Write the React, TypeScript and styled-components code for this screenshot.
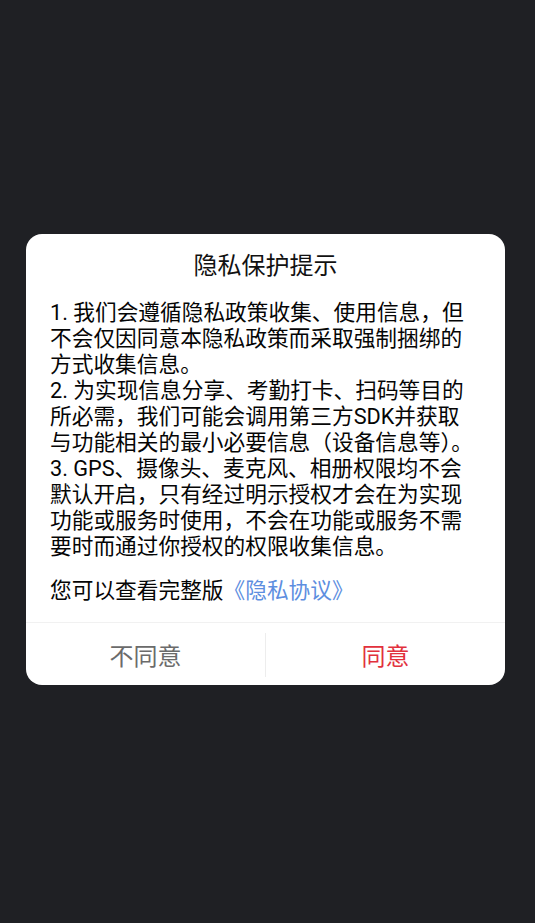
import { FC } from 'react'
import styled, { createGlobalStyle } from 'styled-components'

const GlobalStyle = createGlobalStyle`
  html, body {
    margin: 0;
    padding: 0;
    background: #1f2024;
  }
  * {
    box-sizing: border-box;
  }
`

const Page = styled.div`
  min-height: 100vh;
  display: flex;
  align-items: center;
  padding: 0 0 4px 26px;
  font-family: Roboto, 'Noto Sans CJK SC', sans-serif;
`

const Dialog = styled.div`
  width: 479px;
  background: #ffffff;
  border-radius: 16px;
  overflow: hidden;
  display: flex;
  flex-direction: column;
`

const Title = styled.h2`
  margin: 0;
  padding-top: 16px;
  font-size: 24px;
  line-height: 32px;
  font-weight: 400;
  color: #111;
  text-align: center;
`

const Body = styled.div`
  padding: 18px 27px 18px 24px;
  display: flex;
  flex-direction: column;
  gap: 18px;
`

const Terms = styled.div`
  font-size: 21.7px;
  line-height: 26px;
  color: #050505;
`

const Note = styled.p`
  margin: 0;
  font-size: 21.7px;
  line-height: 26px;
  color: #050505;
`

const Link = styled.a`
  color: #5d8ee0;
  text-decoration: none;
`

const Footer = styled.div`
  display: flex;
  height: 63px;
  border-top: 1px solid #f1f1f1;
`

const Divider = styled.span`
  width: 1px;
  margin: 10px 0 8px;
  background: #ededed;
`

const Action = styled.button<{ $primary?: boolean }>`
  flex: 1;
  border: none;
  background: transparent;
  padding: 0;
  font-family: inherit;
  font-size: 24px;
  color: ${({ $primary }) => ($primary ? '#e2313d' : '#6b6b6b')};
  cursor: pointer;
`

const items = [
  '1. 我们会遵循隐私政策收集、使用信息，但不会仅因同意本隐私政策而采取强制捆绑的方式收集信息。',
  '2. 为实现信息分享、考勤打卡、扫码等目的所必需，我们可能会调用第三方SDK并获取与功能相关的最小必要信息（设备信息等）。',
  '3. GPS、摄像头、麦克风、相册权限均不会默认开启，只有经过明示授权才会在为实现功能或服务时使用，不会在功能或服务不需要时而通过你授权的权限收集信息。',
]

const App: FC = () => {
  return (
    <>
      <GlobalStyle />
      <Page>
        <Dialog>
          <Title>隐私保护提示</Title>
          <Body>
            <Terms>
              {items.map((text) => (
                <div key={text}>{text}</div>
              ))}
            </Terms>
            <Note>
              您可以查看完整版<Link href="#">《隐私协议》</Link>
            </Note>
          </Body>
          <Footer>
            <Action>不同意</Action>
            <Divider />
            <Action $primary>同意</Action>
          </Footer>
        </Dialog>
      </Page>
    </>
  )
}

export default App
